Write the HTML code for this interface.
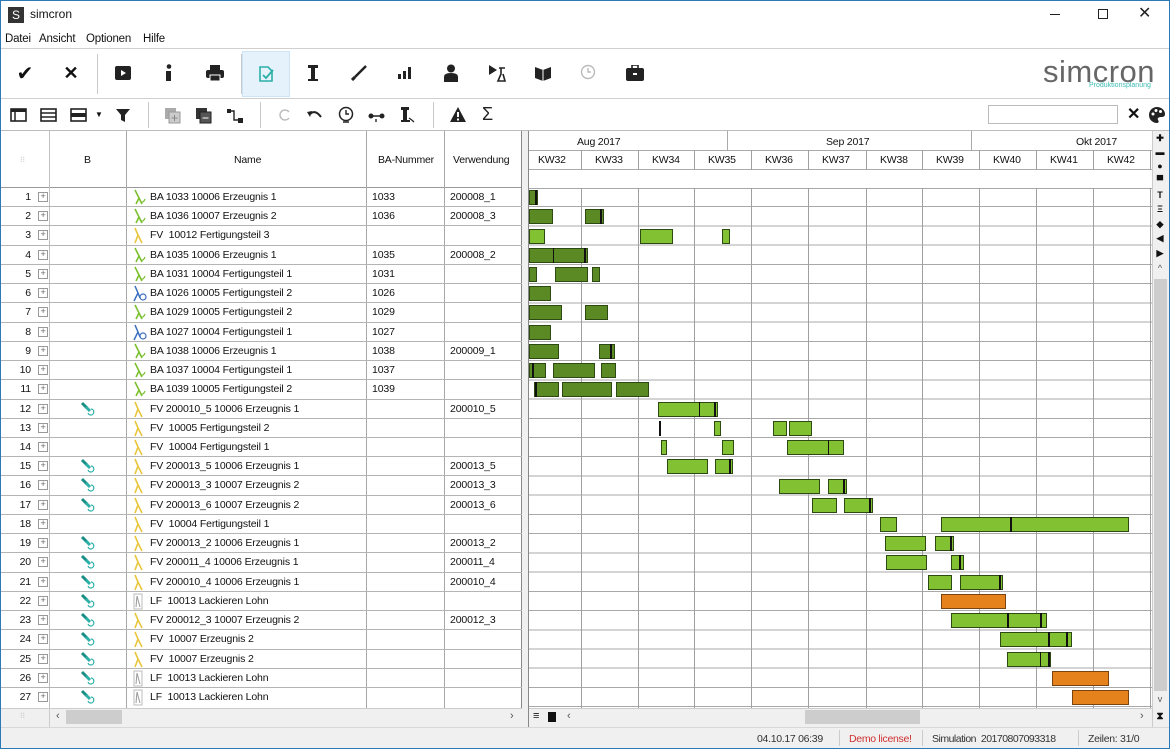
<!DOCTYPE html>
<html><head><meta charset="utf-8">
<style>
*{box-sizing:border-box;margin:0;padding:0}
body{width:1170px;height:749px;overflow:hidden;background:#fff;font-family:"Liberation Sans",sans-serif;font-size:11px;color:#111;position:relative}
.a{position:absolute}
.frame{left:0;top:0;width:1170px;height:749px;border:1px solid #2a7ab8;z-index:50;pointer-events:none}
.tb{position:absolute;top:0;height:48px;display:flex;align-items:center;justify-content:center}
.hl{background:#e5f1fb;border:1px solid #cce4f7}
.vsep{position:absolute;width:1px;background:#c8c8c8}
.t2{position:absolute;top:106px;width:18px;height:18px}
.row{position:absolute;left:0;width:522px;height:19.23px;border-bottom:1px solid #b4b4b4;font-size:10.5px;line-height:18px;letter-spacing:-0.15px}
.row span{position:absolute;top:0;white-space:nowrap}
.n{width:31px;text-align:right;left:0}
.pl{left:38px;top:4px!important;width:10px;height:10px;border:1px solid #999;background:#fff;font-size:9px;line-height:7px;text-align:center;color:#666}
.nm{left:150px}
.ba{left:372px}
.vw{left:450px}
.ic{left:131px;top:1px!important}
.bi{left:80px;top:1px!important}
.cl{position:absolute;top:131px;height:577px;width:1px;background:#c0c0c0}
.gl{position:absolute;top:150px;height:558px;width:1px;background:#a0a0a0}
.b{position:absolute;height:15px;border:1px solid #2e4a14}
.d{background:#5b8a24}
.l{background:#82c232}
.o{background:#e5821c;border-color:#7a4410}
.m{position:absolute;width:2px;height:15px;background:#111}
.s{position:absolute;width:1px;height:15px;background:#2e4a14}
.rs{position:absolute;left:1154px;width:12px;text-align:center;font-size:9px;font-weight:bold}
.st{position:absolute;top:733px;font-size:10.5px;color:#333;letter-spacing:-0.3px;white-space:nowrap}
.hd{position:absolute;font-size:10.5px;letter-spacing:-0.2px}
.mn{position:absolute;top:33px;font-size:11.5px;letter-spacing:-0.2px}
</style></head><body>
<div class="a frame"></div>
<!-- title -->
<div class="a" style="left:8px;top:7px;width:16px;height:16px;background:#333;color:#fff;font-size:12px;text-align:center;line-height:16px">S</div>
<div class="a" style="left:30px;top:7px;font-size:12px">simcron</div>
<div class="a" style="left:1050px;top:14px;width:10px;height:1px;background:#222"></div>
<div class="a" style="left:1098px;top:9px;width:10px;height:10px;border:1px solid #222"></div>
<div class="a" style="left:1138px;top:3px;font-size:16px;color:#222">✕</div>
<!-- menu -->
<div class="mn" style="left:5px">Datei</div>
<div class="mn" style="left:39px">Ansicht</div>
<div class="mn" style="left:86px">Optionen</div>
<div class="mn" style="left:143px">Hilfe</div>
<div class="a" style="left:0;top:48px;width:1170px;height:1px;background:#d0d0d0"></div>
<!-- toolbar 1 -->
<div class="a" style="left:0;top:49px;width:1170px;height:49px">
<div class="tb" style="left:2px;width:46px;font-size:20px">✔</div>
<div class="tb" style="left:48px;width:46px;font-size:18px;font-weight:bold">✕</div>
<div class="vsep" style="left:97px;top:5px;height:40px"></div>
<div class="tb" style="left:100px;width:46px"><svg width="16" height="14"><rect x="0" y="0" width="16" height="14" rx="2" fill="#222"/><path d="M6 4 L11 7 L6 10Z" fill="#fff"/></svg></div>
<div class="tb" style="left:146px;width:46px"><svg width="8" height="18"><circle cx="4" cy="2.5" r="2.3" fill="#222"/><rect x="1" y="7" width="5" height="10" fill="#222"/></svg></div>
<div class="tb" style="left:192px;width:46px"><svg width="18" height="16"><rect x="4" y="0" width="10" height="5" fill="#222"/><rect x="0" y="5" width="18" height="8" rx="2" fill="#222"/><rect x="4" y="10" width="10" height="6" fill="#222" stroke="#fff"/></svg></div>
<div class="vsep" style="left:241px;top:5px;height:40px"></div>
<div class="tb hl" style="left:242px;top:2px;width:48px;height:46px"><svg width="18" height="18"><path d="M3 2 H11 L15 6 V16 H3Z" fill="none" stroke="#2bb0a8" stroke-width="1.6"/><path d="M6 10 L9 13 L16 5" fill="none" stroke="#2bb0a8" stroke-width="1.8"/></svg></div>
<div class="tb" style="left:290px;width:46px"><svg width="12" height="18"><path d="M1 1H11V4H8V15H11V17H1V15H4V4H1Z" fill="#222"/></svg></div>
<div class="tb" style="left:336px;width:46px"><svg width="16" height="16"><path d="M15 1 L4 12" stroke="#222" stroke-width="2.5"/><path d="M4 12 L1 15" stroke="#222" stroke-width="3"/></svg></div>
<div class="tb" style="left:382px;width:46px"><svg width="14" height="12"><rect x="0" y="7" width="3" height="5" fill="#222"/><rect x="5" y="4" width="3" height="8" fill="#222"/><rect x="10" y="0" width="3" height="12" fill="#222"/></svg></div>
<div class="tb" style="left:428px;width:46px"><svg width="14" height="18"><circle cx="7" cy="4.5" r="4" fill="#222"/><path d="M0 18 V13 Q0 9 7 9 Q14 9 14 13 V18Z" fill="#222"/></svg></div>
<div class="tb" style="left:474px;width:46px"><svg width="18" height="18"><path d="M1 1 L9 6 L1 11Z" fill="#222"/><path d="M11 4H17M13 4V10L10 17H17L15 10" fill="none" stroke="#222" stroke-width="1.6"/></svg></div>
<div class="tb" style="left:520px;width:46px"><svg width="18" height="16"><path d="M1 2 L9 5 L17 2 V13 L9 16 L1 13Z" fill="#222"/><path d="M9 5 V16" stroke="#fff"/></svg></div>
<div class="tb" style="left:566px;width:46px"><svg width="18" height="18"><circle cx="8" cy="8" r="6.5" fill="none" stroke="#bbb" stroke-width="1.4"/><path d="M8 4V8H11" fill="none" stroke="#bbb" stroke-width="1.4"/></svg></div>
<div class="tb" style="left:612px;width:46px"><svg width="18" height="16"><rect x="6" y="0" width="6" height="4" fill="none" stroke="#222" stroke-width="1.6"/><rect x="0" y="3" width="18" height="13" rx="2" fill="#222"/><rect x="7" y="8" width="4" height="2" fill="#fff"/></svg></div>
<div class="a" style="left:1043px;top:5px;font-size:31px;color:#666;letter-spacing:0.5px">simcron</div>
<div class="a" style="left:1089px;top:33px;font-size:7px;color:#3bbdb5">Produktionsplanung</div>
</div>
<div class="a" style="left:0;top:98px;width:1170px;height:1px;background:#d0d0d0"></div>
<!-- toolbar 2 -->
<svg class="t2" style="left:10px" viewBox="0 0 18 18"><rect x="1" y="3" width="15" height="12" fill="none" stroke="#222" stroke-width="1.6"/><rect x="1" y="3" width="15" height="3" fill="#222"/><path d="M5 6V15" stroke="#222" stroke-width="1.5"/></svg>
<svg class="t2" style="left:40px" viewBox="0 0 18 18"><rect x="1" y="3" width="15" height="12" fill="none" stroke="#222" stroke-width="1.6"/><path d="M1 7H16M1 11H16" stroke="#222" stroke-width="1.5"/></svg>
<svg class="t2" style="left:70px" viewBox="0 0 18 18"><rect x="1" y="3" width="15" height="12" fill="none" stroke="#222" stroke-width="1.6"/><rect x="1" y="7" width="15" height="4" fill="#222"/></svg>
<div class="a" style="left:95px;top:110px;font-size:8px">▼</div>
<svg class="t2" style="left:114px" viewBox="0 0 18 18"><path d="M2 3H16L11 9V16L7 14V9Z" fill="#222"/></svg>
<div class="vsep" style="left:148px;top:102px;height:26px"></div>
<svg class="t2" style="left:164px" viewBox="0 0 18 18"><rect x="1" y="2" width="11" height="11" fill="#aaa"/><rect x="5" y="6" width="11" height="11" fill="#ccc" stroke="#999"/><path d="M10.5 9V15M7.5 12H13.5" stroke="#888"/></svg>
<svg class="t2" style="left:195px" viewBox="0 0 18 18"><rect x="1" y="2" width="11" height="11" fill="#333"/><rect x="5" y="6" width="11" height="11" fill="#555" stroke="#222"/><path d="M7.5 12H13.5" stroke="#fff"/></svg>
<svg class="t2" style="left:226px" viewBox="0 0 18 18"><rect x="1" y="3" width="4" height="4" fill="#222"/><rect x="12" y="12" width="5" height="5" fill="#222"/><path d="M3 5H8V14H13" fill="none" stroke="#222" stroke-width="1.4"/></svg>
<div class="vsep" style="left:260px;top:102px;height:26px"></div>
<svg class="t2" style="left:276px" viewBox="0 0 18 18"><path d="M13 6A5 5 0 1 0 13 12" fill="none" stroke="#bbb" stroke-width="1.4"/></svg>
<svg class="t2" style="left:306px" viewBox="0 0 18 18"><path d="M4 8Q9 3 15 11" fill="none" stroke="#222" stroke-width="2"/><path d="M1 6L6 5L4 11Z" fill="#222"/></svg>
<svg class="t2" style="left:337px" viewBox="0 0 18 18"><circle cx="9" cy="8" r="6.5" fill="none" stroke="#222" stroke-width="1.5"/><path d="M9 4V8H12M6 16H12" fill="none" stroke="#222" stroke-width="1.4"/></svg>
<svg class="t2" style="left:368px" viewBox="0 0 18 18"><circle cx="3" cy="10" r="2.5" fill="#222"/><circle cx="14" cy="10" r="2.5" fill="#222"/><path d="M3 10H14M8 13V16" stroke="#222" stroke-width="1.4"/></svg>
<svg class="t2" style="left:398px" viewBox="0 0 18 18"><path d="M3 1H11V4H9V14H12V16H3V14H5V4H3Z" fill="#222"/><path d="M11 12Q14 14 16 16" stroke="#222" stroke-width="1.3" fill="none"/></svg>
<div class="vsep" style="left:433px;top:102px;height:26px"></div>
<svg class="t2" style="left:449px" viewBox="0 0 18 18"><path d="M9 1L17 16H1Z" fill="#222"/><rect x="8" y="6" width="2" height="5" fill="#fff"/><rect x="8" y="12.5" width="2" height="2" fill="#fff"/></svg>
<div class="a" style="left:482px;top:104px;font-size:18px;color:#222">Σ</div>
<div class="a" style="left:988px;top:105px;width:130px;height:19px;border:1px solid #bbb"></div>
<div class="a" style="left:1127px;top:104px;font-size:16px;font-weight:bold">✕</div>
<svg class="a" style="left:1148px;top:106px" width="18" height="18" viewBox="0 0 18 18"><path d="M9 1C4 1 1 5 1 9C1 14 5 17 9 17C11 17 11 15 10 14C9 12 11 11 13 11C16 11 17 10 17 8C17 4 13 1 9 1Z" fill="#222"/><circle cx="5" cy="8" r="1.5" fill="#fff"/><circle cx="8" cy="4.5" r="1.5" fill="#fff"/><circle cx="12.5" cy="5.5" r="1.5" fill="#fff"/></svg>
<div class="a" style="left:0;top:130px;width:1170px;height:1px;background:#bbb"></div>

<!-- left table header -->
<div class="a" style="left:0;top:131px;width:522px;height:57px;border-bottom:1px solid #999"></div>
<div class="a" style="left:20px;top:155px;font-size:8px;color:#bbb">⁝⁝</div>
<div class="hd" style="left:84px;top:154px">B</div>
<div class="hd" style="left:234px;top:154px">Name</div>
<div class="hd" style="left:378px;top:154px">BA-Nummer</div>
<div class="hd" style="left:453px;top:154px">Verwendung</div>
<div class="cl" style="left:49px"></div>
<div class="cl" style="left:126px;background:#a8a8a8"></div>
<div class="cl" style="left:366px;background:#a8a8a8"></div>
<div class="cl" style="left:444px;background:#a8a8a8"></div>
<div class="a" style="left:521px;top:131px;width:1px;height:596px;background:#888"></div>
<div class="a" style="left:522px;top:131px;width:6px;height:596px;background:#f0f0f0"></div>
<div class="a" style="left:528px;top:131px;width:1px;height:596px;background:#888"></div>

<!-- rows -->
<div class="a" style="left:0;top:188px;width:522px;height:520px">
<svg width="0" height="0" style="position:absolute"><defs>
<g id="ig"><path d="M4 1L8 9L5 15M8 9L11 15" fill="none" stroke="#7bbf2e" stroke-width="1.6"/><path d="M9 12Q12 15 14 10" fill="none" stroke="#7bbf2e" stroke-width="1.2"/></g>
<g id="iy"><path d="M4 1L7 8L4 16M7 8L11 16" fill="none" stroke="#e8c53c" stroke-width="1.6"/></g>
<g id="ib"><path d="M4 1L7 8L3 16M7 8L9 13" fill="none" stroke="#3a6fc0" stroke-width="1.5"/><circle cx="12" cy="12" r="3" fill="none" stroke="#3a6fc0" stroke-width="1.2"/></g>
<g id="ie"><rect x="3" y="1" width="8" height="15" fill="none" stroke="#bbb"/><path d="M6 3L5 14M6 3L9 14" fill="none" stroke="#999"/></g>
<g id="it"><path d="M2 2L7 7" stroke="#1a8e86" stroke-width="3"/><path d="M6 6L10 10" stroke="#2bb0a8" stroke-width="3"/><path d="M11 8A3 3 0 1 1 8 12" fill="none" stroke="#2bb0a8" stroke-width="1.2"/></g>
</defs></svg>
<div class="row" style="top:0"><span class="n">1</span><span class="pl">+</span><span class="ic"><svg width="16" height="17"><use href="#ig"/></svg></span><span class="nm">BA 1033 10006 Erzeugnis 1</span><span class="ba">1033</span><span class="vw">200008_1</span></div>
<div class="row" style="top:19.23px"><span class="n">2</span><span class="pl">+</span><span class="ic"><svg width="16" height="17"><use href="#ig"/></svg></span><span class="nm">BA 1036 10007 Erzeugnis 2</span><span class="ba">1036</span><span class="vw">200008_3</span></div>
<div class="row" style="top:38.46px"><span class="n">3</span><span class="pl">+</span><span class="ic"><svg width="16" height="17"><use href="#iy"/></svg></span><span class="nm">FV&nbsp; 10012 Fertigungsteil 3</span></div>
<div class="row" style="top:57.69px"><span class="n">4</span><span class="pl">+</span><span class="ic"><svg width="16" height="17"><use href="#ig"/></svg></span><span class="nm">BA 1035 10006 Erzeugnis 1</span><span class="ba">1035</span><span class="vw">200008_2</span></div>
<div class="row" style="top:76.92px"><span class="n">5</span><span class="pl">+</span><span class="ic"><svg width="16" height="17"><use href="#ig"/></svg></span><span class="nm">BA 1031 10004 Fertigungsteil 1</span><span class="ba">1031</span></div>
<div class="row" style="top:96.15px"><span class="n">6</span><span class="pl">+</span><span class="ic"><svg width="16" height="17"><use href="#ib"/></svg></span><span class="nm">BA 1026 10005 Fertigungsteil 2</span><span class="ba">1026</span></div>
<div class="row" style="top:115.38px"><span class="n">7</span><span class="pl">+</span><span class="ic"><svg width="16" height="17"><use href="#ig"/></svg></span><span class="nm">BA 1029 10005 Fertigungsteil 2</span><span class="ba">1029</span></div>
<div class="row" style="top:134.61px"><span class="n">8</span><span class="pl">+</span><span class="ic"><svg width="16" height="17"><use href="#ib"/></svg></span><span class="nm">BA 1027 10004 Fertigungsteil 1</span><span class="ba">1027</span></div>
<div class="row" style="top:153.84px"><span class="n">9</span><span class="pl">+</span><span class="ic"><svg width="16" height="17"><use href="#ig"/></svg></span><span class="nm">BA 1038 10006 Erzeugnis 1</span><span class="ba">1038</span><span class="vw">200009_1</span></div>
<div class="row" style="top:173.07px"><span class="n">10</span><span class="pl">+</span><span class="ic"><svg width="16" height="17"><use href="#ig"/></svg></span><span class="nm">BA 1037 10004 Fertigungsteil 1</span><span class="ba">1037</span></div>
<div class="row" style="top:192.3px"><span class="n">11</span><span class="pl">+</span><span class="ic"><svg width="16" height="17"><use href="#ig"/></svg></span><span class="nm">BA 1039 10005 Fertigungsteil 2</span><span class="ba">1039</span></div>
<div class="row" style="top:211.53px"><span class="n">12</span><span class="pl">+</span><span class="bi"><svg width="16" height="17"><use href="#it"/></svg></span><span class="ic"><svg width="16" height="17"><use href="#iy"/></svg></span><span class="nm">FV 200010_5 10006 Erzeugnis 1</span><span class="vw">200010_5</span></div>
<div class="row" style="top:230.76px"><span class="n">13</span><span class="pl">+</span><span class="ic"><svg width="16" height="17"><use href="#iy"/></svg></span><span class="nm">FV&nbsp; 10005 Fertigungsteil 2</span></div>
<div class="row" style="top:249.99px"><span class="n">14</span><span class="pl">+</span><span class="ic"><svg width="16" height="17"><use href="#iy"/></svg></span><span class="nm">FV&nbsp; 10004 Fertigungsteil 1</span></div>
<div class="row" style="top:269.22px"><span class="n">15</span><span class="pl">+</span><span class="bi"><svg width="16" height="17"><use href="#it"/></svg></span><span class="ic"><svg width="16" height="17"><use href="#iy"/></svg></span><span class="nm">FV 200013_5 10006 Erzeugnis 1</span><span class="vw">200013_5</span></div>
<div class="row" style="top:288.45px"><span class="n">16</span><span class="pl">+</span><span class="bi"><svg width="16" height="17"><use href="#it"/></svg></span><span class="ic"><svg width="16" height="17"><use href="#iy"/></svg></span><span class="nm">FV 200013_3 10007 Erzeugnis 2</span><span class="vw">200013_3</span></div>
<div class="row" style="top:307.68px"><span class="n">17</span><span class="pl">+</span><span class="bi"><svg width="16" height="17"><use href="#it"/></svg></span><span class="ic"><svg width="16" height="17"><use href="#iy"/></svg></span><span class="nm">FV 200013_6 10007 Erzeugnis 2</span><span class="vw">200013_6</span></div>
<div class="row" style="top:326.91px"><span class="n">18</span><span class="pl">+</span><span class="ic"><svg width="16" height="17"><use href="#iy"/></svg></span><span class="nm">FV&nbsp; 10004 Fertigungsteil 1</span></div>
<div class="row" style="top:346.14px"><span class="n">19</span><span class="pl">+</span><span class="bi"><svg width="16" height="17"><use href="#it"/></svg></span><span class="ic"><svg width="16" height="17"><use href="#iy"/></svg></span><span class="nm">FV 200013_2 10006 Erzeugnis 1</span><span class="vw">200013_2</span></div>
<div class="row" style="top:365.37px"><span class="n">20</span><span class="pl">+</span><span class="bi"><svg width="16" height="17"><use href="#it"/></svg></span><span class="ic"><svg width="16" height="17"><use href="#iy"/></svg></span><span class="nm">FV 200011_4 10006 Erzeugnis 1</span><span class="vw">200011_4</span></div>
<div class="row" style="top:384.6px"><span class="n">21</span><span class="pl">+</span><span class="bi"><svg width="16" height="17"><use href="#it"/></svg></span><span class="ic"><svg width="16" height="17"><use href="#iy"/></svg></span><span class="nm">FV 200010_4 10006 Erzeugnis 1</span><span class="vw">200010_4</span></div>
<div class="row" style="top:403.83px"><span class="n">22</span><span class="pl">+</span><span class="bi"><svg width="16" height="17"><use href="#it"/></svg></span><span class="ic"><svg width="16" height="17"><use href="#ie"/></svg></span><span class="nm">LF&nbsp; 10013 Lackieren Lohn</span></div>
<div class="row" style="top:423.06px"><span class="n">23</span><span class="pl">+</span><span class="bi"><svg width="16" height="17"><use href="#it"/></svg></span><span class="ic"><svg width="16" height="17"><use href="#iy"/></svg></span><span class="nm">FV 200012_3 10007 Erzeugnis 2</span><span class="vw">200012_3</span></div>
<div class="row" style="top:442.29px"><span class="n">24</span><span class="pl">+</span><span class="bi"><svg width="16" height="17"><use href="#it"/></svg></span><span class="ic"><svg width="16" height="17"><use href="#iy"/></svg></span><span class="nm">FV&nbsp; 10007 Erzeugnis 2</span></div>
<div class="row" style="top:461.52px"><span class="n">25</span><span class="pl">+</span><span class="bi"><svg width="16" height="17"><use href="#it"/></svg></span><span class="ic"><svg width="16" height="17"><use href="#iy"/></svg></span><span class="nm">FV&nbsp; 10007 Erzeugnis 2</span></div>
<div class="row" style="top:480.75px"><span class="n">26</span><span class="pl">+</span><span class="bi"><svg width="16" height="17"><use href="#it"/></svg></span><span class="ic"><svg width="16" height="17"><use href="#ie"/></svg></span><span class="nm">LF&nbsp; 10013 Lackieren Lohn</span></div>
<div class="row" style="top:499.98px;border-bottom:none"><span class="n">27</span><span class="pl">+</span><span class="bi"><svg width="16" height="17"><use href="#it"/></svg></span><span class="ic"><svg width="16" height="17"><use href="#ie"/></svg></span><span class="nm">LF&nbsp; 10013 Lackieren Lohn</span></div>
</div>

<!-- gantt header -->
<div class="a" style="left:529px;top:150px;width:623px;height:1px;background:#aaa"></div>
<div class="a" style="left:529px;top:169px;width:623px;height:1px;background:#aaa"></div>
<div class="a" style="left:727px;top:131px;width:1px;height:19px;background:#aaa"></div>
<div class="a" style="left:971px;top:131px;width:1px;height:19px;background:#aaa"></div>
<div class="hd" style="left:577px;top:136px">Aug 2017</div>
<div class="hd" style="left:826px;top:136px">Sep 2017</div>
<div class="hd" style="left:1076px;top:136px">Okt 2017</div>
<div class="a" style="left:529px;top:188px;width:623px;height:520px;background:repeating-linear-gradient(to bottom,transparent 0,transparent 18.23px,#a8a8a8 18.23px,#a8a8a8 19.23px)"></div>
<div class="a" style="left:529px;top:188px;width:623px;height:1px;background:#a8a8a8"></div>
<div class="gl" style="left:581px"></div><div class="gl" style="left:638px"></div><div class="gl" style="left:694px"></div><div class="gl" style="left:751px"></div><div class="gl" style="left:808px"></div><div class="gl" style="left:866px"></div><div class="gl" style="left:922px"></div><div class="gl" style="left:979px"></div><div class="gl" style="left:1036px"></div><div class="gl" style="left:1093px"></div><div class="gl" style="left:1150px"></div>
<div class="a" style="left:529px;top:170px;width:623px;height:18px;background:#fff"></div>
<div class="hd" style="top:154px;left:538px">KW32</div><div class="hd" style="top:154px;left:595px">KW33</div><div class="hd" style="top:154px;left:652px">KW34</div><div class="hd" style="top:154px;left:708px">KW35</div><div class="hd" style="top:154px;left:765px">KW36</div><div class="hd" style="top:154px;left:822px">KW37</div><div class="hd" style="top:154px;left:880px">KW38</div><div class="hd" style="top:154px;left:936px">KW39</div><div class="hd" style="top:154px;left:993px">KW40</div><div class="hd" style="top:154px;left:1050px">KW41</div><div class="hd" style="top:154px;left:1107px">KW42</div>

<!-- bars -->
<div class="b d" style="left:529px;top:190px;width:9px"></div><div class="m" style="left:535px;top:190px"></div>
<div class="b d" style="left:529px;top:209.2px;width:24px"></div><div class="b d" style="left:585px;top:209.2px;width:19px"></div><div class="m" style="left:600px;top:209.2px"></div>
<div class="b l" style="left:529px;top:228.5px;width:16px"></div><div class="b l" style="left:640px;top:228.5px;width:33px"></div><div class="b l" style="left:722px;top:228.5px;width:8px"></div>
<div class="b d" style="left:529px;top:247.7px;width:59px"></div><div class="s" style="left:553px;top:247.7px;background:#111"></div><div class="m" style="left:584px;top:247.7px"></div>
<div class="b d" style="left:529px;top:266.9px;width:8px"></div><div class="b d" style="left:555px;top:266.9px;width:33px"></div><div class="b d" style="left:592px;top:266.9px;width:8px"></div>
<div class="b d" style="left:529px;top:286.2px;width:22px"></div>
<div class="b d" style="left:529px;top:305.4px;width:33px"></div><div class="b d" style="left:585px;top:305.4px;width:23px"></div>
<div class="b d" style="left:529px;top:324.6px;width:22px"></div>
<div class="b d" style="left:529px;top:343.8px;width:30px"></div><div class="b d" style="left:599px;top:343.8px;width:16px"></div><div class="m" style="left:610px;top:343.8px"></div>
<div class="b d" style="left:529px;top:363.1px;width:17px"></div><div class="m" style="left:532px;top:363.1px"></div><div class="b d" style="left:553px;top:363.1px;width:42px"></div><div class="b d" style="left:601px;top:363.1px;width:15px"></div>
<div class="b d" style="left:534px;top:382.3px;width:25px"></div><div class="m" style="left:535px;top:382.3px"></div><div class="b d" style="left:562px;top:382.3px;width:50px"></div><div class="b d" style="left:616px;top:382.3px;width:33px"></div>
<div class="b l" style="left:658px;top:401.5px;width:60px"></div><div class="s" style="left:699px;top:401.5px;background:#111"></div><div class="m" style="left:714px;top:401.5px"></div>
<div class="m" style="left:659px;top:420.8px"></div><div class="b l" style="left:714px;top:420.8px;width:7px"></div><div class="b l" style="left:773px;top:420.8px;width:14px"></div><div class="b l" style="left:789px;top:420.8px;width:23px"></div>
<div class="b l" style="left:661px;top:440px;width:6px"></div><div class="b l" style="left:722px;top:440px;width:12px"></div><div class="b l" style="left:787px;top:440px;width:57px"></div><div class="s" style="left:828px;top:440px;background:#111"></div>
<div class="b l" style="left:667px;top:459.2px;width:41px"></div><div class="b l" style="left:715px;top:459.2px;width:18px"></div><div class="m" style="left:729px;top:459.2px"></div>
<div class="b l" style="left:779px;top:478.5px;width:41px"></div><div class="b l" style="left:828px;top:478.5px;width:19px"></div><div class="m" style="left:843px;top:478.5px"></div>
<div class="b l" style="left:812px;top:497.7px;width:25px"></div><div class="b l" style="left:844px;top:497.7px;width:29px"></div><div class="m" style="left:869px;top:497.7px"></div>
<div class="b l" style="left:880px;top:516.9px;width:17px"></div><div class="b l" style="left:941px;top:516.9px;width:188px"></div><div class="m" style="left:1010px;top:516.9px"></div>
<div class="b l" style="left:885px;top:536.1px;width:41px"></div><div class="b l" style="left:935px;top:536.1px;width:19px"></div><div class="m" style="left:950px;top:536.1px"></div>
<div class="b l" style="left:886px;top:555.4px;width:41px"></div><div class="b l" style="left:951px;top:555.4px;width:13px"></div><div class="m" style="left:959px;top:555.4px"></div>
<div class="b l" style="left:928px;top:574.6px;width:24px"></div><div class="b l" style="left:960px;top:574.6px;width:43px"></div><div class="m" style="left:999px;top:574.6px"></div>
<div class="b o" style="left:941px;top:593.8px;width:65px"></div>
<div class="b l" style="left:951px;top:613.1px;width:96px"></div><div class="m" style="left:1007px;top:613.1px"></div><div class="m" style="left:1040px;top:613.1px"></div>
<div class="b l" style="left:1000px;top:632.3px;width:72px"></div><div class="m" style="left:1048px;top:632.3px"></div><div class="m" style="left:1066px;top:632.3px"></div>
<div class="b l" style="left:1007px;top:651.5px;width:44px"></div><div class="s" style="left:1040px;top:651.5px;background:#111"></div><div class="m" style="left:1048px;top:651.5px"></div>
<div class="b o" style="left:1052px;top:670.8px;width:57px"></div>
<div class="b o" style="left:1072px;top:690px;width:57px"></div>

<!-- right strip -->
<div class="a" style="left:1152px;top:131px;width:17px;height:596px;background:#f0f0f0;border-left:1px solid #ccc"></div>
<div class="rs" style="top:133px">✚</div>
<div class="rs" style="top:147px">▬</div>
<div class="rs" style="top:161px">●</div>
<div class="rs" style="top:175px">▀</div>
<div class="rs" style="top:190px">T</div>
<div class="rs" style="top:204px">Ξ</div>
<div class="rs" style="top:219px">◆</div>
<div class="rs" style="top:233px">◀</div>
<div class="rs" style="top:248px">▶</div>
<div class="rs" style="top:263px;color:#555;font-weight:normal">^</div>
<div class="a" style="left:1154px;top:279px;width:13px;height:412px;background:#cdcdcd"></div>
<div class="rs" style="top:694px;color:#555;font-weight:normal">v</div>
<div class="rs" style="top:711px;font-size:10px">⧗</div>

<!-- bottom scrollbars -->
<div class="a" style="left:0;top:708px;width:522px;height:19px;background:#f0f0f0;border-top:1px solid #ccc"></div>
<div class="a" style="left:20px;top:711px;font-size:8px;color:#bbb">⁝⁝</div>
<div class="a" style="left:49px;top:708px;width:1px;height:19px;background:#ccc"></div>
<div class="a" style="left:56px;top:710px;color:#555">‹</div>
<div class="a" style="left:66px;top:710px;width:56px;height:14px;background:#cdcdcd"></div>
<div class="a" style="left:510px;top:710px;color:#555">›</div>
<div class="a" style="left:529px;top:708px;width:623px;height:19px;background:#f0f0f0;border-top:1px solid #ccc"></div>
<div class="a" style="left:533px;top:710px;font-size:11px;font-weight:bold">≡</div>
<div class="a" style="left:548px;top:712px;width:8px;height:10px;background:#111"></div>
<div class="a" style="left:567px;top:710px;color:#555">‹</div>
<div class="a" style="left:805px;top:710px;width:115px;height:14px;background:#cdcdcd"></div>
<div class="a" style="left:1140px;top:710px;color:#555">›</div>

<!-- status bar -->
<div class="a" style="left:0;top:727px;width:1170px;height:22px;background:#f0f0f0;border-top:1px solid #d8d8d8"></div>
<div class="st" style="left:757px">04.10.17 06:39</div>
<div class="a" style="left:839px;top:730px;width:1px;height:16px;background:#ccc"></div>
<div class="st" style="left:849px;color:#d03030">Demo license!</div>
<div class="a" style="left:922px;top:730px;width:1px;height:16px;background:#ccc"></div>
<div class="st" style="left:932px;letter-spacing:-0.5px">Simulation&nbsp; 20170807093318</div>
<div class="a" style="left:1078px;top:730px;width:1px;height:16px;background:#ccc"></div>
<div class="st" style="left:1088px">Zeilen: 31/0</div>
</body></html>
